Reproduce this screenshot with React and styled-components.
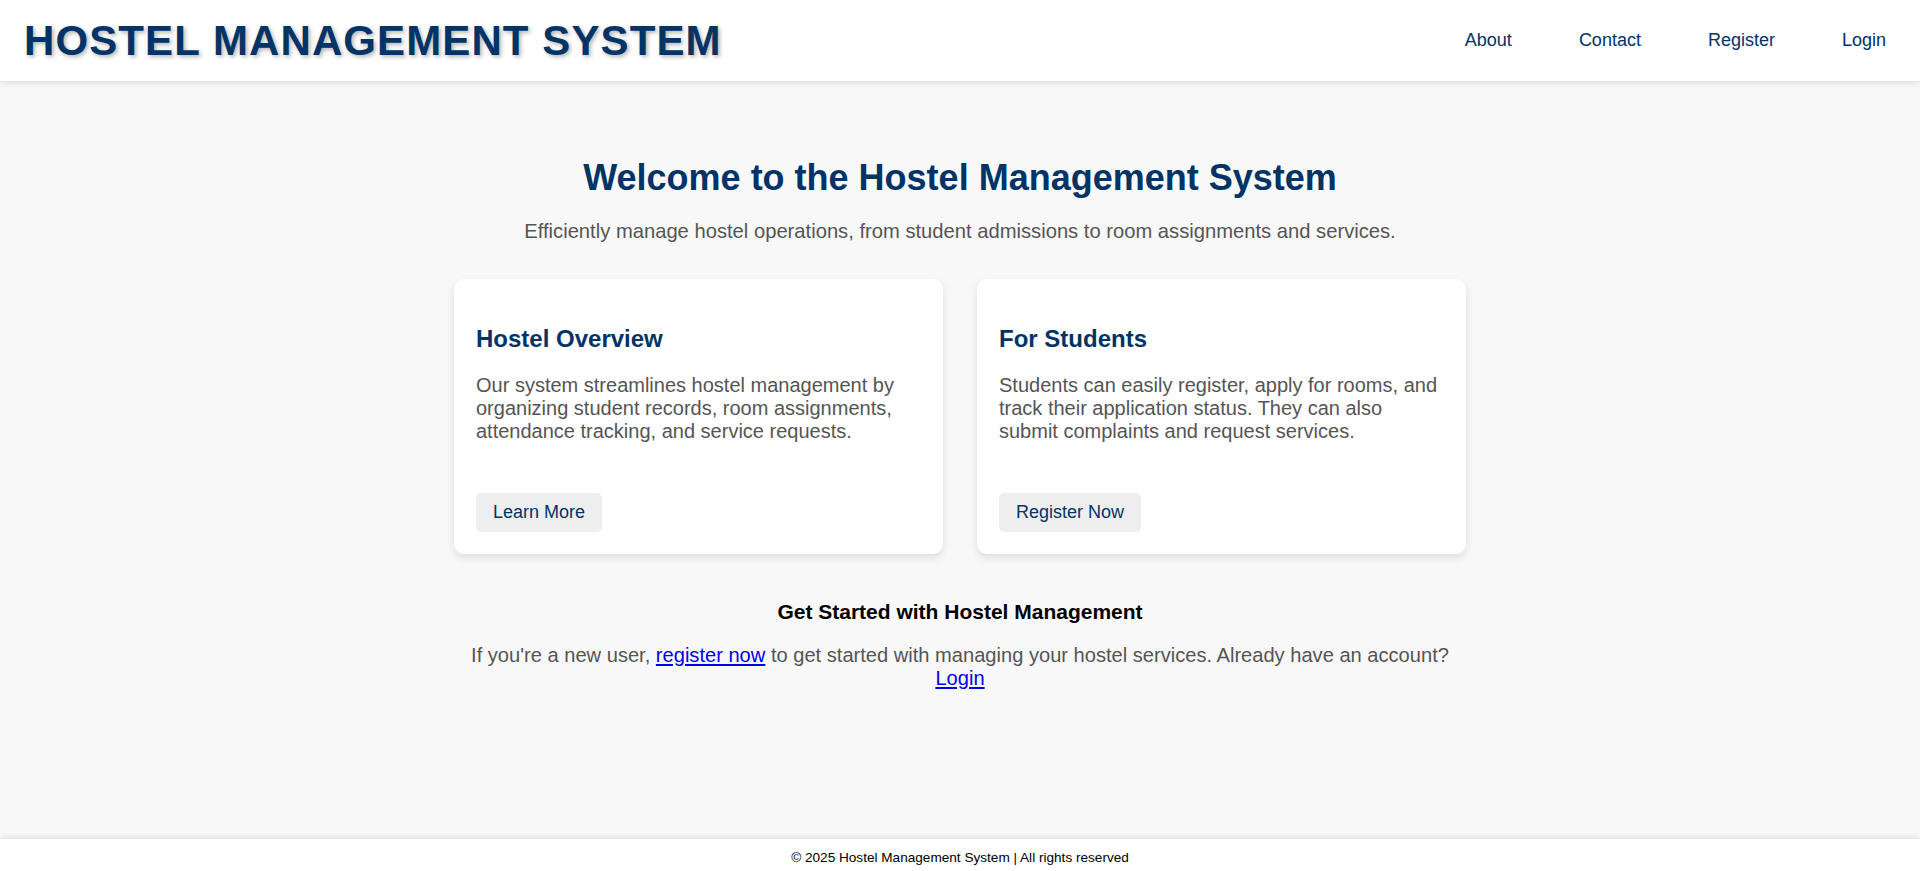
import React from "react";
import styled, { createGlobalStyle } from "styled-components";

const GlobalStyle = createGlobalStyle`
  html, body {
    margin: 0;
    padding: 0;
  }
  body {
    font-family: "Liberation Sans", Arial, sans-serif;
    background: #f8f8f8;
  }
  * { box-sizing: border-box; }
`;

const Page = styled.div`
  min-height: 100vh;
  display: flex;
  flex-direction: column;
`;

const Header = styled.header`
  height: 81px;
  background: #ffffff;
  box-shadow: 0 2px 6px rgba(0, 0, 0, 0.12);
  display: flex;
  align-items: center;
  justify-content: space-between;
  padding: 0 34px 0 24px;
  position: relative;
  z-index: 1;
`;

const Brand = styled.h1`
  margin: 0;
  font-size: 42px;
  font-weight: bold;
  letter-spacing: 1.1px;
  color: #003366;
  text-shadow: 2px 2px 4px rgba(0, 0, 0, 0.3);
  line-height: 1;
  padding-top: 1px;
`;

const Nav = styled.nav`
  display: flex;
  align-items: center;
  gap: 67px;
`;

const NavLink = styled.a`
  color: #003366;
  font-size: 18px;
  text-decoration: none;
`;

const Main = styled.main`
  flex: 1;
  display: flex;
  flex-direction: column;
  align-items: center;
  padding: 0 20px 40px;
`;

const Title = styled.h2`
  margin: 76px 0 0;
  font-size: 36px;
  font-weight: bold;
  color: #003366;
  text-align: center;
`;

const Lead = styled.p`
  margin: 21px 0 0;
  font-size: 20.2px;
  color: #555555;
  text-align: center;
`;

const CardRow = styled.section`
  display: flex;
  gap: 34px;
  margin-top: 36px;
  width: 1012px;
`;

const Card = styled.article`
  flex: 1;
  background: #ffffff;
  border-radius: 10px;
  box-shadow: 0 4px 8px rgba(0, 0, 0, 0.1);
  padding: 22px;
  display: flex;
  flex-direction: column;
  align-items: flex-start;
`;

const CardTitle = styled.h3`
  margin: 24px 0 0;
  font-size: 24px;
  font-weight: bold;
  color: #003366;
`;

const CardText = styled.p`
  margin: 21px 0 0;
  font-size: 20px;
  color: #555555;
`;

const CardButton = styled.a`
  margin-top: 50px;
  display: inline-block;
  background: #eeeeee;
  color: #003366;
  font-size: 18px;
  padding: 9px 17px;
  border-radius: 5px;
  text-decoration: none;
`;

const Started = styled.section`
  width: 1012px;
  margin-top: 46px;
  text-align: center;
`;

const StartedTitle = styled.h3`
  margin: 0;
  font-size: 21px;
  font-weight: bold;
  color: #000000;
`;

const StartedText = styled.p`
  margin: 20px 0 0;
  font-size: 20.1px;
  color: #555555;

  a {
    color: #0000ee;
    text-decoration: underline;
  }
`;

const Footer = styled.footer`
  height: 32px;
  background: #ffffff;
  box-shadow: 0 -2px 6px rgba(0, 0, 0, 0.1);
  display: flex;
  align-items: flex-start;
  justify-content: center;
  padding-top: 11px;
  font-size: 13.6px;
  line-height: 1.15;
  color: #000000;
`;

export default function App() {
  return (
    <Page>
      <GlobalStyle />
      <Header>
        <Brand>HOSTEL MANAGEMENT SYSTEM</Brand>
        <Nav>
          <NavLink href="#">About</NavLink>
          <NavLink href="#">Contact</NavLink>
          <NavLink href="#">Register</NavLink>
          <NavLink href="#">Login</NavLink>
        </Nav>
      </Header>
      <Main>
        <Title>Welcome to the Hostel Management System</Title>
        <Lead>
          Efficiently manage hostel operations, from student admissions to room
          assignments and services.
        </Lead>
        <CardRow>
          <Card>
            <CardTitle>Hostel Overview</CardTitle>
            <CardText>
              Our system streamlines hostel management by organizing student
              records, room assignments, attendance tracking, and service
              requests.
            </CardText>
            <CardButton href="#">Learn More</CardButton>
          </Card>
          <Card>
            <CardTitle>For Students</CardTitle>
            <CardText>
              Students can easily register, apply for rooms, and track their
              application status. They can also submit complaints and request
              services.
            </CardText>
            <CardButton href="#">Register Now</CardButton>
          </Card>
        </CardRow>
        <Started>
          <StartedTitle>Get Started with Hostel Management</StartedTitle>
          <StartedText>
            If you're a new user, <a href="#">register now</a> to get started
            with managing your hostel services. Already have an account?{" "}
            <a href="#">Login</a>
          </StartedText>
        </Started>
      </Main>
      <Footer>© 2025 Hostel Management System | All rights reserved</Footer>
    </Page>
  );
}
